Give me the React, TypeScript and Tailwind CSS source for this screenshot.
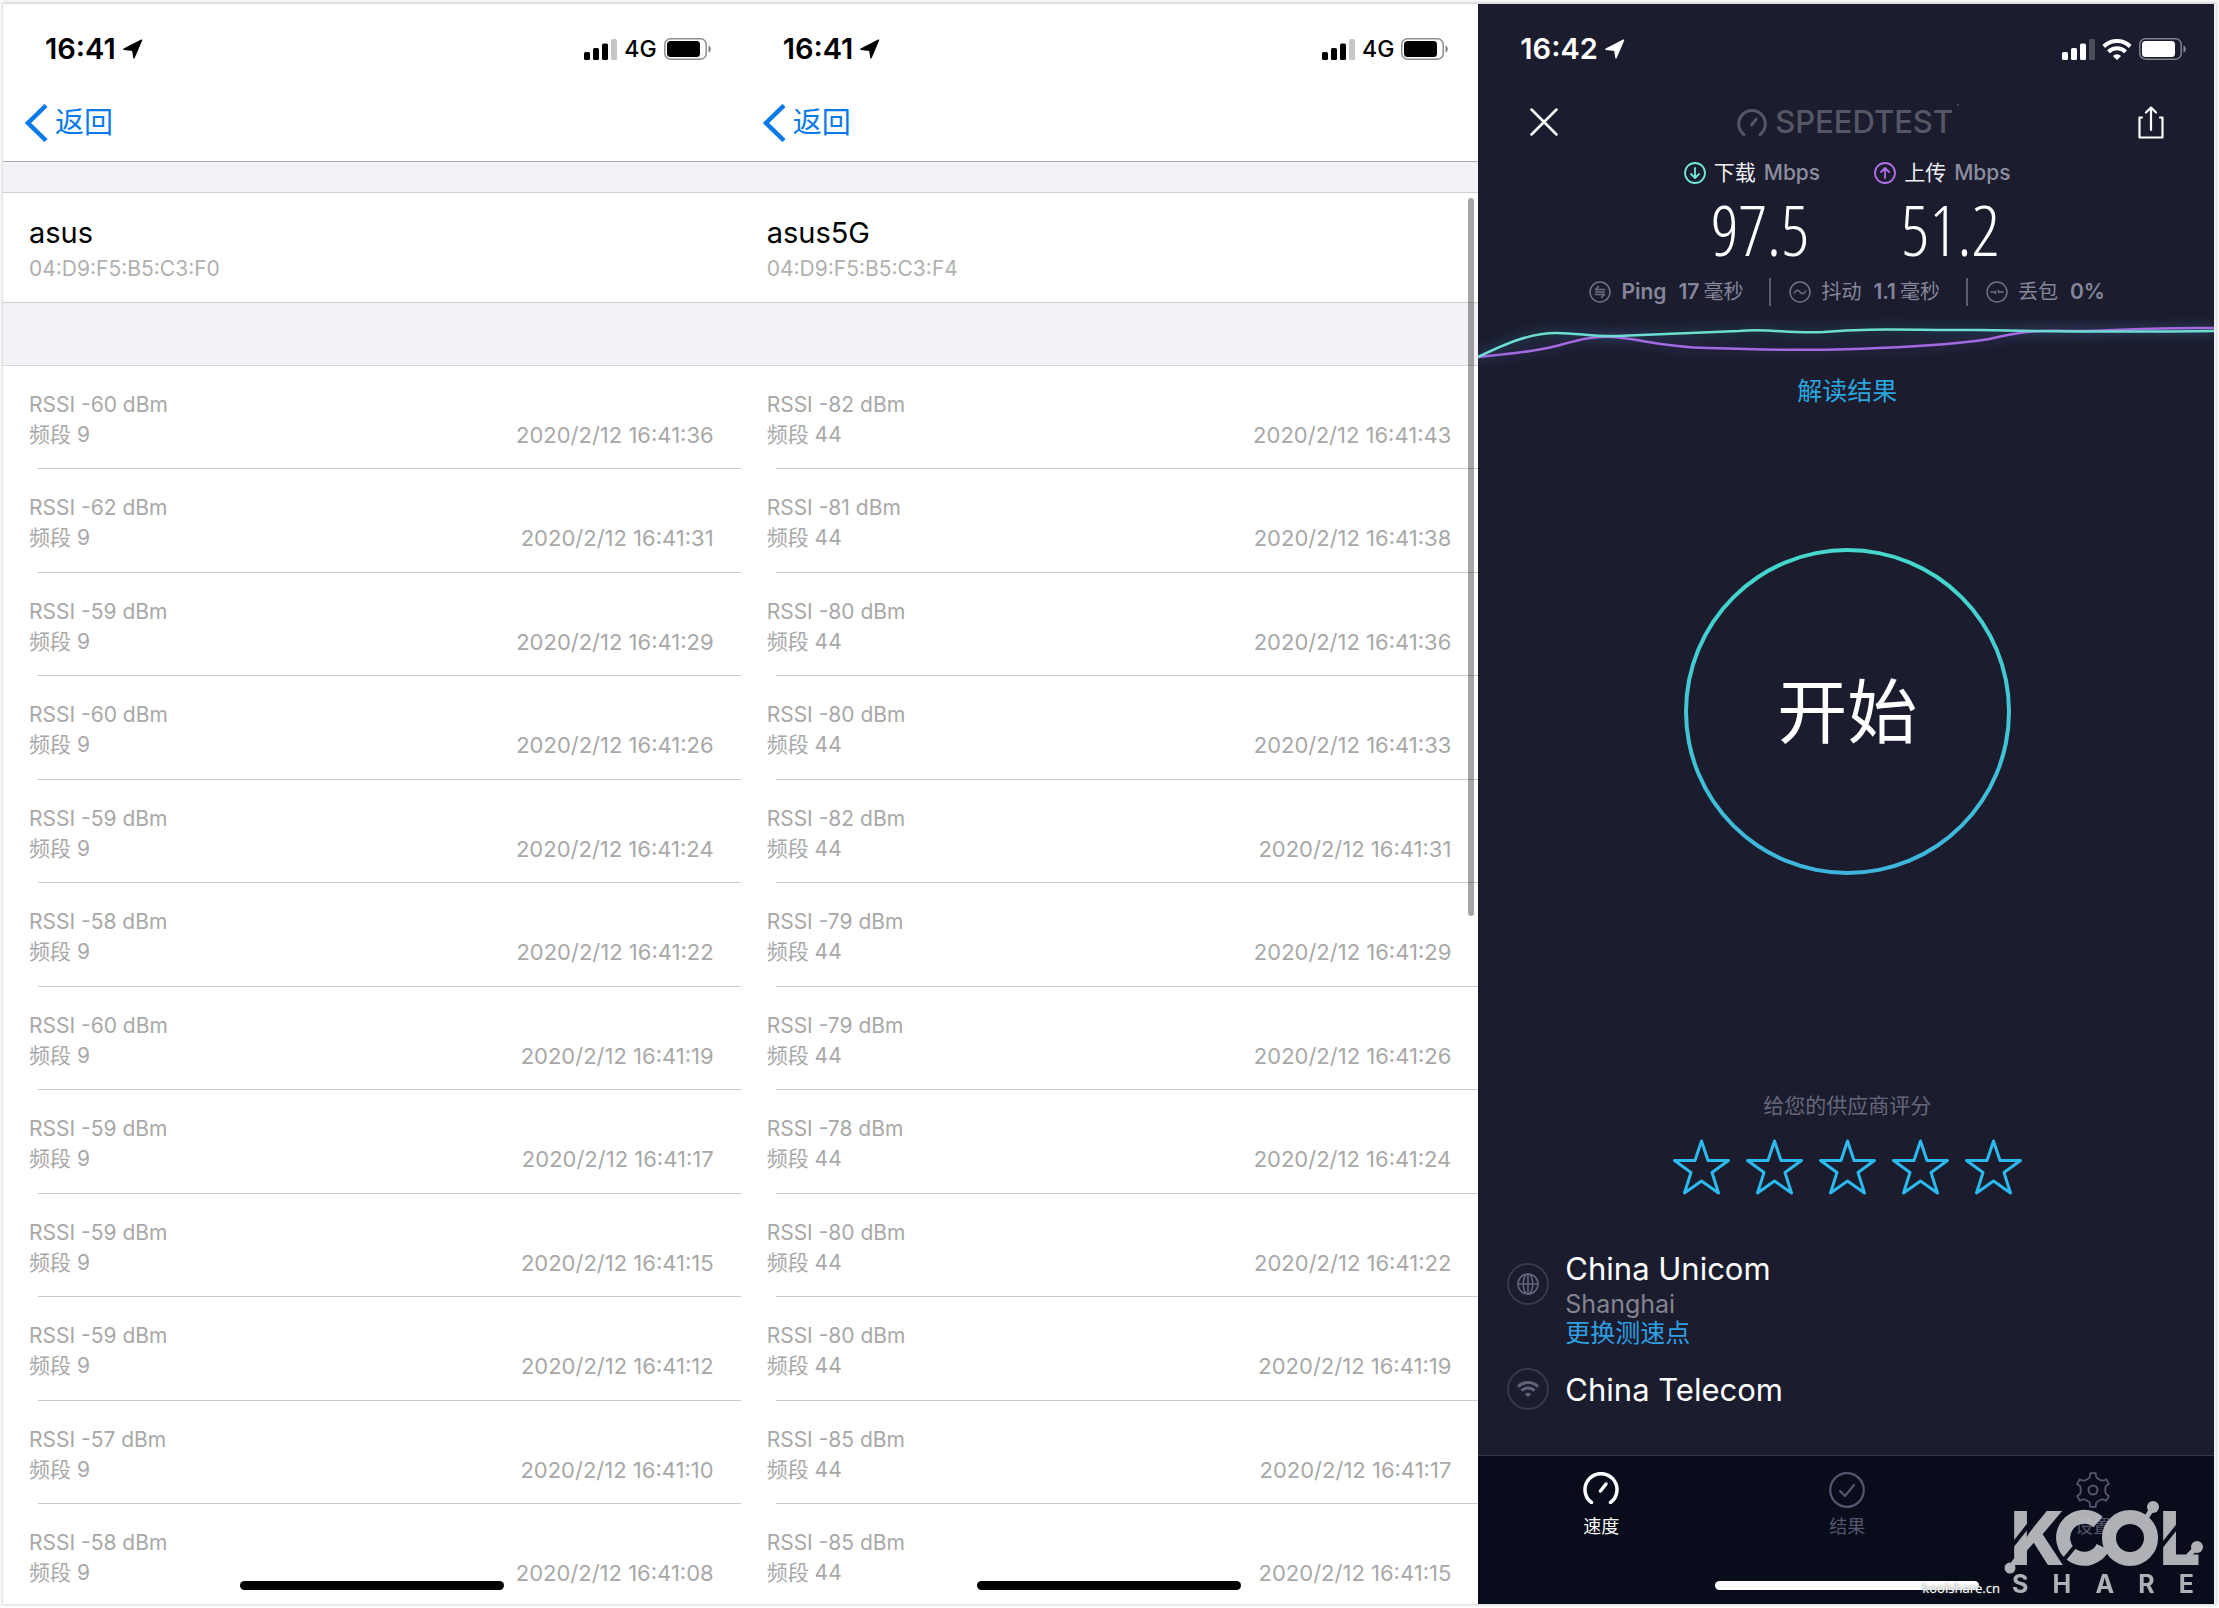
import React from 'react';

interface Reading {
  rssi: number;
  channel: number;
  time: string;
}

const makeReadings = (channel: number, rows: [number, string][]): Reading[] =>
  rows.map(([rssi, time]) => ({ rssi, channel, time: `2020/2/12 16:41:${time}` }));

const asusReadings = makeReadings(9, [
  [-60, '36'],
  [-62, '31'],
  [-59, '29'],
  [-60, '26'],
  [-59, '24'],
  [-58, '22'],
  [-60, '19'],
  [-59, '17'],
  [-59, '15'],
  [-59, '12'],
  [-57, '10'],
  [-58, '08'],
]);

const asus5gReadings = makeReadings(44, [
  [-82, '43'],
  [-81, '38'],
  [-80, '36'],
  [-80, '33'],
  [-82, '31'],
  [-79, '29'],
  [-79, '26'],
  [-78, '24'],
  [-80, '22'],
  [-80, '19'],
  [-85, '17'],
  [-85, '15'],
]);

/* ---------- status bar ---------- */

const LocationArrow = () => (
  <svg width="20" height="20" viewBox="0 0 20 20" fill="currentColor" stroke="currentColor" strokeWidth="1.500" strokeLinejoin="round">
    <path d="M18.500 1.200 1 10.200l8.800 1L11 18.800z" />
  </svg>
);

const SignalBars = () => (
  <svg width="33" height="21" viewBox="0 0 33 21" fill="currentColor">
    <rect x="0" y="13" width="6" height="8" rx="1.500" />
    <rect x="9" y="9" width="6" height="12" rx="1.500" />
    <rect x="18" y="4.500" width="6" height="16.500" rx="1.500" />
    <rect x="27" y="0" width="6" height="21" rx="1.500" opacity="0.22" />
  </svg>
);

const WifiIcon = ({ className }: { className?: string }) => (
  <svg className={className} viewBox="0 0 29 21" fill="none" stroke="currentColor" strokeWidth="4">
    <path d="M1.300 7.500a18.500 18.500 0 0 1 26.400 0" />
    <path d="M6 12.800a12 12 0 0 1 17 0" />
    <path d="M14.500 21 10.400 17a5.800 5.800 0 0 1 8.200 0z" fill="currentColor" stroke="none" />
  </svg>
);

const Battery = () => (
  <svg width="48" height="22" viewBox="0 0 48 22">
    <rect x="0.800" y="0.800" width="41.400" height="20.400" rx="5.500" fill="none" stroke="currentColor" strokeWidth="1.500" opacity="0.450" />
    <rect x="3" y="3" width="33" height="16" rx="3.500" fill="currentColor" />
    <path d="M44.500 7.500c3 1 3 6 0 7z" fill="currentColor" opacity="0.500" />
  </svg>
);

const StatusBar = ({ time, wifi = false }: { time: string; wifi?: boolean }) => (
  <div className="flex h-[88px] items-center justify-between pt-[2px] pr-[29px] pl-[42px]">
    <div className="flex items-center gap-[7px]">
      <span className="text-[29px] leading-9 font-semibold">{time}</span>
      <LocationArrow />
    </div>
    <div className="flex items-center gap-[7px]">
      <SignalBars />
      {wifi ? <WifiIcon className="h-[21px] w-[30px]" /> : <span className="text-[23px] leading-9 font-medium">4G</span>}
      <Battery />
    </div>
  </div>
);

/* ---------- signal log screens ---------- */

interface SignalScreenProps {
  name: string;
  mac: string;
  readings: Reading[];
  scrollbar?: boolean;
}

const SignalScreen: React.FC<SignalScreenProps> = ({ name, mac, readings, scrollbar }) => (
  <section className="relative h-[1600px] overflow-hidden bg-white text-black">
    <StatusBar time="16:41" />
    <nav className="flex h-[70px] items-center border-b border-[#a9a9ad] pb-2 pl-[21px]">
      <button type="button" className="flex items-center gap-[7px] text-[29px] leading-9 text-[#0a7aea]">
        <svg width="24" height="38" viewBox="0 0 24 38" fill="none" stroke="currentColor" strokeWidth="4.500">
          <path d="M22 1.500 4 19l18 17.500" />
        </svg>
        返回
      </button>
    </nav>
    <div className="h-[30px] bg-[#f1f1f6]" />
    <header className="h-[111px] border-y border-[#cfcfd2] pt-[22px] pl-[26px]">
      <h1 className="text-[29px] leading-9">{name}</h1>
      <p className="text-[21px] leading-9 text-[#b0b0b0]">{mac}</p>
    </header>
    <div className="h-[63px] border-b border-[#d6d6d9] bg-[#f1f1f6]" />
    <ul className="text-[21px] leading-[30px] text-[#a8a8a8]">
      {readings.map((r) => (
        <li key={r.time} className="flex flex-col odd:h-[103px] even:h-[104px]">
          <div className="flex flex-1 items-start justify-between pt-[24px] pr-[27px] pl-[26px]">
            <div>
              <p>RSSI {r.rssi} dBm</p>
              <p>频段 {r.channel}</p>
            </div>
            <time className="pt-[30px] text-[22px]">{r.time}</time>
          </div>
          <hr className="ml-[35px] border-[#cbcbcb]" />
        </li>
      ))}
    </ul>
    {scrollbar && <div className="absolute top-[194px] right-[4px] h-[718px] w-[6px] rounded-full bg-black/35" />}
    <div className="absolute bottom-[14px] left-1/2 h-[9px] w-[264px] -translate-x-1/2 rounded-full bg-black" />
  </section>
);

/* ---------- speed test screen ---------- */

const Gauge = ({ className, strokeWidth = 3 }: { className?: string; strokeWidth?: number }) => (
  <svg className={className} viewBox="0 0 36 32" fill="none" stroke="currentColor" strokeWidth={strokeWidth} strokeLinecap="round">
    <path d="M8.500 30.500a16 16 0 1 1 19 0" />
    <path d="m17.500 19 5.500-7" />
  </svg>
);

const Metric = ({ label, value, up = false }: { label: string; value: string; up?: boolean }) => (
  <div>
    <div className="flex h-10 items-center gap-2 pt-[2px] text-[21px]">
      <svg
        className={up ? 'text-[#b06ee8]' : 'text-[#6fe8d8]'}
        width="22"
        height="22"
        viewBox="0 0 22 22"
        fill="none"
        stroke="currentColor"
        strokeWidth="1.800"
        strokeLinecap="round"
        strokeLinejoin="round"
      >
        <circle cx="11" cy="11" r="10" />
        {up ? <path d="M11 16V6.500M7 10l4-4 4 4" /> : <path d="M11 6v9.500M7 12l4 4 4-4" />}
      </svg>
      <span className="text-[#f0f0f4]">{label}</span>
      <span className="font-medium text-[#8c8d9f]">Mbps</span>
    </div>
    <p className="h-[75px] pl-4 text-center font-['Open_Sans_Condensed_Light','Open_Sans_Light_Condensed','Noto_Sans_ExtraCondensed_Thin','Noto_Sans_ExtraCondensed_Light','Noto_Sans_ExtraCondensed','Roboto_Condensed','Roboto',sans-serif] text-[70px] leading-[74px] font-light">
      {value}
    </p>
  </div>
);

interface StatProps {
  label: string;
  value: string;
  unit?: string;
  children: React.ReactNode;
}

const Stat = ({ label, value, unit, children }: StatProps) => (
  <div className="flex items-center gap-[10px]">
    <svg width="22" height="22" viewBox="0 0 22 22" fill="none" stroke="currentColor" strokeWidth="1.500" strokeLinecap="round" strokeLinejoin="round" opacity="0.800">
      <circle cx="11" cy="11" r="10" />
      {children}
    </svg>
    <span className={unit && label === 'Ping' ? 'mr-[2px] text-[21px] font-semibold' : 'mr-[2px]'}>{label}</span>
    <span className="flex items-baseline gap-1">
      <span className="text-[21px] font-semibold">{value}</span>
      {unit && <span>{unit}</span>}
    </span>
  </div>
);

const TEAL = 'M0 42C25 30 50 18 78 18C100 18 115 22 139 21C190 19 235 17 260 16C290 13 310 19 345 17C390 13 420 15 500 15C590 17 660 17 736 16';
const PURPLE = 'M0 42C30 39 55 37 78 31C100 25 112 21 134 22C165 24 180 32 230 33C290 35 350 36 400 33C450 31 480 29 510 24C540 17 555 15 590 16C630 17 660 12 736 13';

const SpeedGraph = () => (
  <svg className="block h-[60px] w-full" viewBox="0 0 736 60" preserveAspectRatio="none" fill="none">
    <defs>
      <filter id="glow" x="-5%" y="-60%" width="110%" height="220%">
        <feGaussianBlur stdDeviation="6" />
      </filter>
    </defs>
    <path d={TEAL} stroke="#2f8fa0" strokeWidth="8" opacity="0.250" filter="url(#glow)" />
    <path d={PURPLE} stroke="#5a4fa8" strokeWidth="8" opacity="0.200" filter="url(#glow)" />
    <path d={PURPLE} stroke="#a46ae0" strokeWidth="2.500" />
    <path d={TEAL} stroke="#6fdcd4" strokeWidth="2.500" />
  </svg>
);

const Star = () => (
  <svg width="57" height="56" viewBox="0 0 57 56" fill="none" stroke="currentColor" strokeWidth="3" strokeLinejoin="round">
    <path d="M28.500 2 35 21.500H55.500L39 33.500 45.500 54 28.500 42 11.500 54 18 33.500 1.500 21.500H22z" />
  </svg>
);

const tabs = [
  { id: 'speed', label: '速度', active: true },
  { id: 'results', label: '结果', active: false },
  { id: 'settings', label: '设置', active: false },
];

// six-tooth gear outline: [angle offset, radius] for each corner of a tooth
const toothCorners = [
  [-20, 12.500],
  [-13, 13.600],
  [-9, 17],
  [9, 17],
  [13, 13.600],
  [20, 12.500],
];

const gearPoints = [0, 60, 120, 180, 240, 300]
  .flatMap((tooth) =>
    toothCorners.map(([offset, r]) => {
      const a = ((tooth + offset) * Math.PI) / 180;
      return `${(18 + r * Math.sin(a)).toFixed(2)},${(18 - r * Math.cos(a)).toFixed(2)}`;
    })
  )
  .join(' ');

const TabIcon = ({ id }: { id: string }) => {
  if (id === 'speed') {
    return <Gauge className="mb-1 h-8 w-9" strokeWidth={3.500} />;
  }
  return (
    <svg width="36" height="36" viewBox="0 0 36 36" fill="none" stroke="currentColor" strokeWidth="2.200" strokeLinecap="round" strokeLinejoin="round">
      {id === 'results' ? (
        <>
          <circle cx="18" cy="18" r="16.800" />
          <path d="m11 19 5 5 9-11" />
        </>
      ) : (
        <>
          <circle cx="18" cy="18" r="4.500" strokeWidth="2" />
          <polygon points={gearPoints} strokeWidth="1.800" />
        </>
      )}
    </svg>
  );
};

const Watermark = () => (
  <div className="absolute right-[2px] bottom-0 font-['Inter',sans-serif] text-[#c3c3c7] opacity-90">
    <svg width="212" height="114" viewBox="0 0 212 114" fill="currentColor">
      <g fontSize="74" fontWeight="800">
        <text x="8" y="75">K</text>
        <text x="157" y="75">L</text>
      </g>
      <g fill="none" stroke="currentColor" strokeWidth="14">
        <path d="M96 32A21 21 0 1 0 101 57" />
        <circle cx="128" cy="48" r="21" />
      </g>
      <g stroke="#090c1b" strokeWidth="4">
        <path d="M10 56 40 18" />
        <path d="M60 72 75 54" />
        <path d="M158 58 178 33" />
      </g>
      <g stroke="currentColor" strokeWidth="5">
        <path d="M8 78 14 70" />
        <path d="M143 30 151 17" />
        <path d="M186 66 195 57" />
      </g>
      <circle cx="8" cy="78" r="5.500" />
      <circle cx="151" cy="17" r="6" />
      <circle cx="195" cy="57" r="6" />
    </svg>
    <div className="absolute right-[20px] bottom-[5px] flex w-[182px] justify-between text-[25px] leading-[30px] font-bold">
      {['S', 'H', 'A', 'R', 'E'].map((c) => (
        <span key={c}>{c}</span>
      ))}
    </div>
  </div>
);

const SpeedTestScreen = () => (
  <section className="relative flex h-[1600px] flex-col overflow-hidden bg-[#1b1c2e] text-white">
    <StatusBar time="16:42" wifi />
    <header className="flex h-[60px] items-center justify-between px-[52px]">
      <button type="button" aria-label="关闭">
        <svg width="28" height="28" viewBox="0 0 28 28" fill="none" stroke="currentColor" strokeWidth="2.500" strokeLinecap="round">
          <path d="m1.500 1.500 25 25M26.500 1.500l-25 25" />
        </svg>
      </button>
      <div className="flex items-center gap-2 text-[#555666]">
        <Gauge className="h-[27px] w-[30px]" strokeWidth={3.600} />
        <span className="text-[31px] leading-9 font-medium">SPEEDTEST</span>
        <span className="-ml-1 size-[2px] self-start rounded-full bg-current" />
      </div>
      <button type="button" aria-label="分享">
        <svg width="26" height="33" viewBox="0 0 26 33" fill="none" stroke="currentColor" strokeWidth="2.200" strokeLinecap="round" strokeLinejoin="round">
          <path d="M4 11.500H1.500V31.500h23V11.500H22M13 24V1.500M8 6.500l5-5 5 5" />
        </svg>
      </button>
    </header>

    <div className="flex justify-center gap-[54px]">
      <Metric label="下载" value="97.5" />
      <Metric label="上传" value="51.2" up />
    </div>

    <div className="flex h-12 items-center justify-center pt-[2px] text-[20px] text-[#85869a]">
      <Stat label="Ping" value="17" unit="毫秒">
        <path d="M15.500 8.500h-9L9.500 5.500M6.500 11h9M6.500 13.500h9l-3 3" />
      </Stat>
      <div className="mr-[18px] ml-[26px] h-7 w-[2px] bg-[#5b5c70]" />
      <Stat label="抖动" value="1.1" unit="毫秒">
        <path d="M5.500 12c1.500-3.500 3.500-3.500 5.500-1s4 2.500 5.500-1" />
      </Stat>
      <div className="mr-[18px] ml-[26px] h-7 w-[2px] bg-[#5b5c70]" />
      <Stat label="丢包" value="0%">
        <path d="M5 11h4M13 11h4M9.500 12.500v-2M12.500 11.500v-2" />
      </Stat>
    </div>

    <SpeedGraph />

    <a href="#results" className="self-center text-[25px] leading-8 text-[#2ba6dc]">
      解读结果
    </a>

    <button
      type="button"
      className="mt-[141px] flex size-[327px] items-center justify-center self-center rounded-full bg-linear-to-b from-[#46d8cb] to-[#3db5dc] p-[4px]"
    >
      <span className="flex size-full items-center justify-center rounded-full bg-[#1b1c2e] pt-[2px] text-[70px] leading-none">开始</span>
    </button>

    <div className="mt-auto flex flex-col items-center">
      <p className="text-[21px] leading-[26px] text-[#66677c]">给您的供应商评分</p>
      <div className="mt-5 flex gap-4 text-[#2cb9ee]">
        {[1, 2, 3, 4, 5].map((n) => (
          <button key={n} type="button" aria-label={`${n}`}>
            <Star />
          </button>
        ))}
      </div>
    </div>

    <div className="mt-[56px] pb-[45px] pl-[29px]">
      <div className="flex gap-4">
        <span className="mt-3 flex size-[42px] items-center justify-center rounded-full border-2 border-[#38394b] text-[#62637a]">
          <svg width="22" height="22" viewBox="0 0 22 22" fill="none" stroke="currentColor" strokeWidth="1.600">
            <circle cx="11" cy="11" r="10" />
            <ellipse cx="11" cy="11" rx="4.800" ry="10" />
            <path d="M11 1v20M1 11h20" />
          </svg>
        </span>
        <div>
          <p className="text-[31px] leading-9">China Unicom</p>
          <p className="mt-[3px] text-[25px] leading-7 text-[#83848f]">Shanghai</p>
          <a href="#servers" className="block text-[25px] leading-[30px] text-[#2e9fe0]">
            更换测速点
          </a>
        </div>
      </div>
      <div className="mt-5 flex items-center gap-4">
        <span className="flex size-[42px] items-center justify-center rounded-full border-2 border-[#38394b] text-[#62637a]">
          <WifiIcon className="h-[16px] w-[22px]" />
        </span>
        <p className="pt-[2px] text-[31px] leading-9">China Telecom</p>
      </div>
    </div>

    <nav className="grid h-[149px] grid-cols-3 items-start border-t border-[#343546] bg-[#090c1b] pt-4">
      {tabs.map((tab) => (
        <button
          key={tab.id}
          type="button"
          className={`flex flex-col items-center gap-2 text-[18px] leading-[22px] ${tab.active ? 'text-white' : 'text-[#55566e]'}`}
        >
          <TabIcon id={tab.id} />
          {tab.label}
        </button>
      ))}
    </nav>

    <div className="absolute bottom-[14px] left-1/2 h-[9px] w-[264px] -translate-x-1/2 rounded-full bg-white" />
    <span className="absolute right-[216px] bottom-[6px] font-['Noto_Sans',sans-serif] text-[13px] leading-5 text-white text-shadow-[0_0_2px_#555]">
      koolshare.cn
    </span>
    <Watermark />
    <div className="absolute inset-y-0 right-0 w-[2px] bg-[#f1f0f3]" />
  </section>
);

export default function App() {
  return (
    <main className="bg-[#fafafa] p-[3px] font-['Inter','Noto_Sans_CJK_SC',sans-serif]">
      <div className="grid grid-cols-3 border-t border-[#dcdcdc] shadow-[0_0_3px_#bbb]">
        <SignalScreen name="asus" mac="04:D9:F5:B5:C3:F0" readings={asusReadings} />
        <SignalScreen name="asus5G" mac="04:D9:F5:B5:C3:F4" readings={asus5gReadings} scrollbar />
        <SpeedTestScreen />
      </div>
    </main>
  );
}
